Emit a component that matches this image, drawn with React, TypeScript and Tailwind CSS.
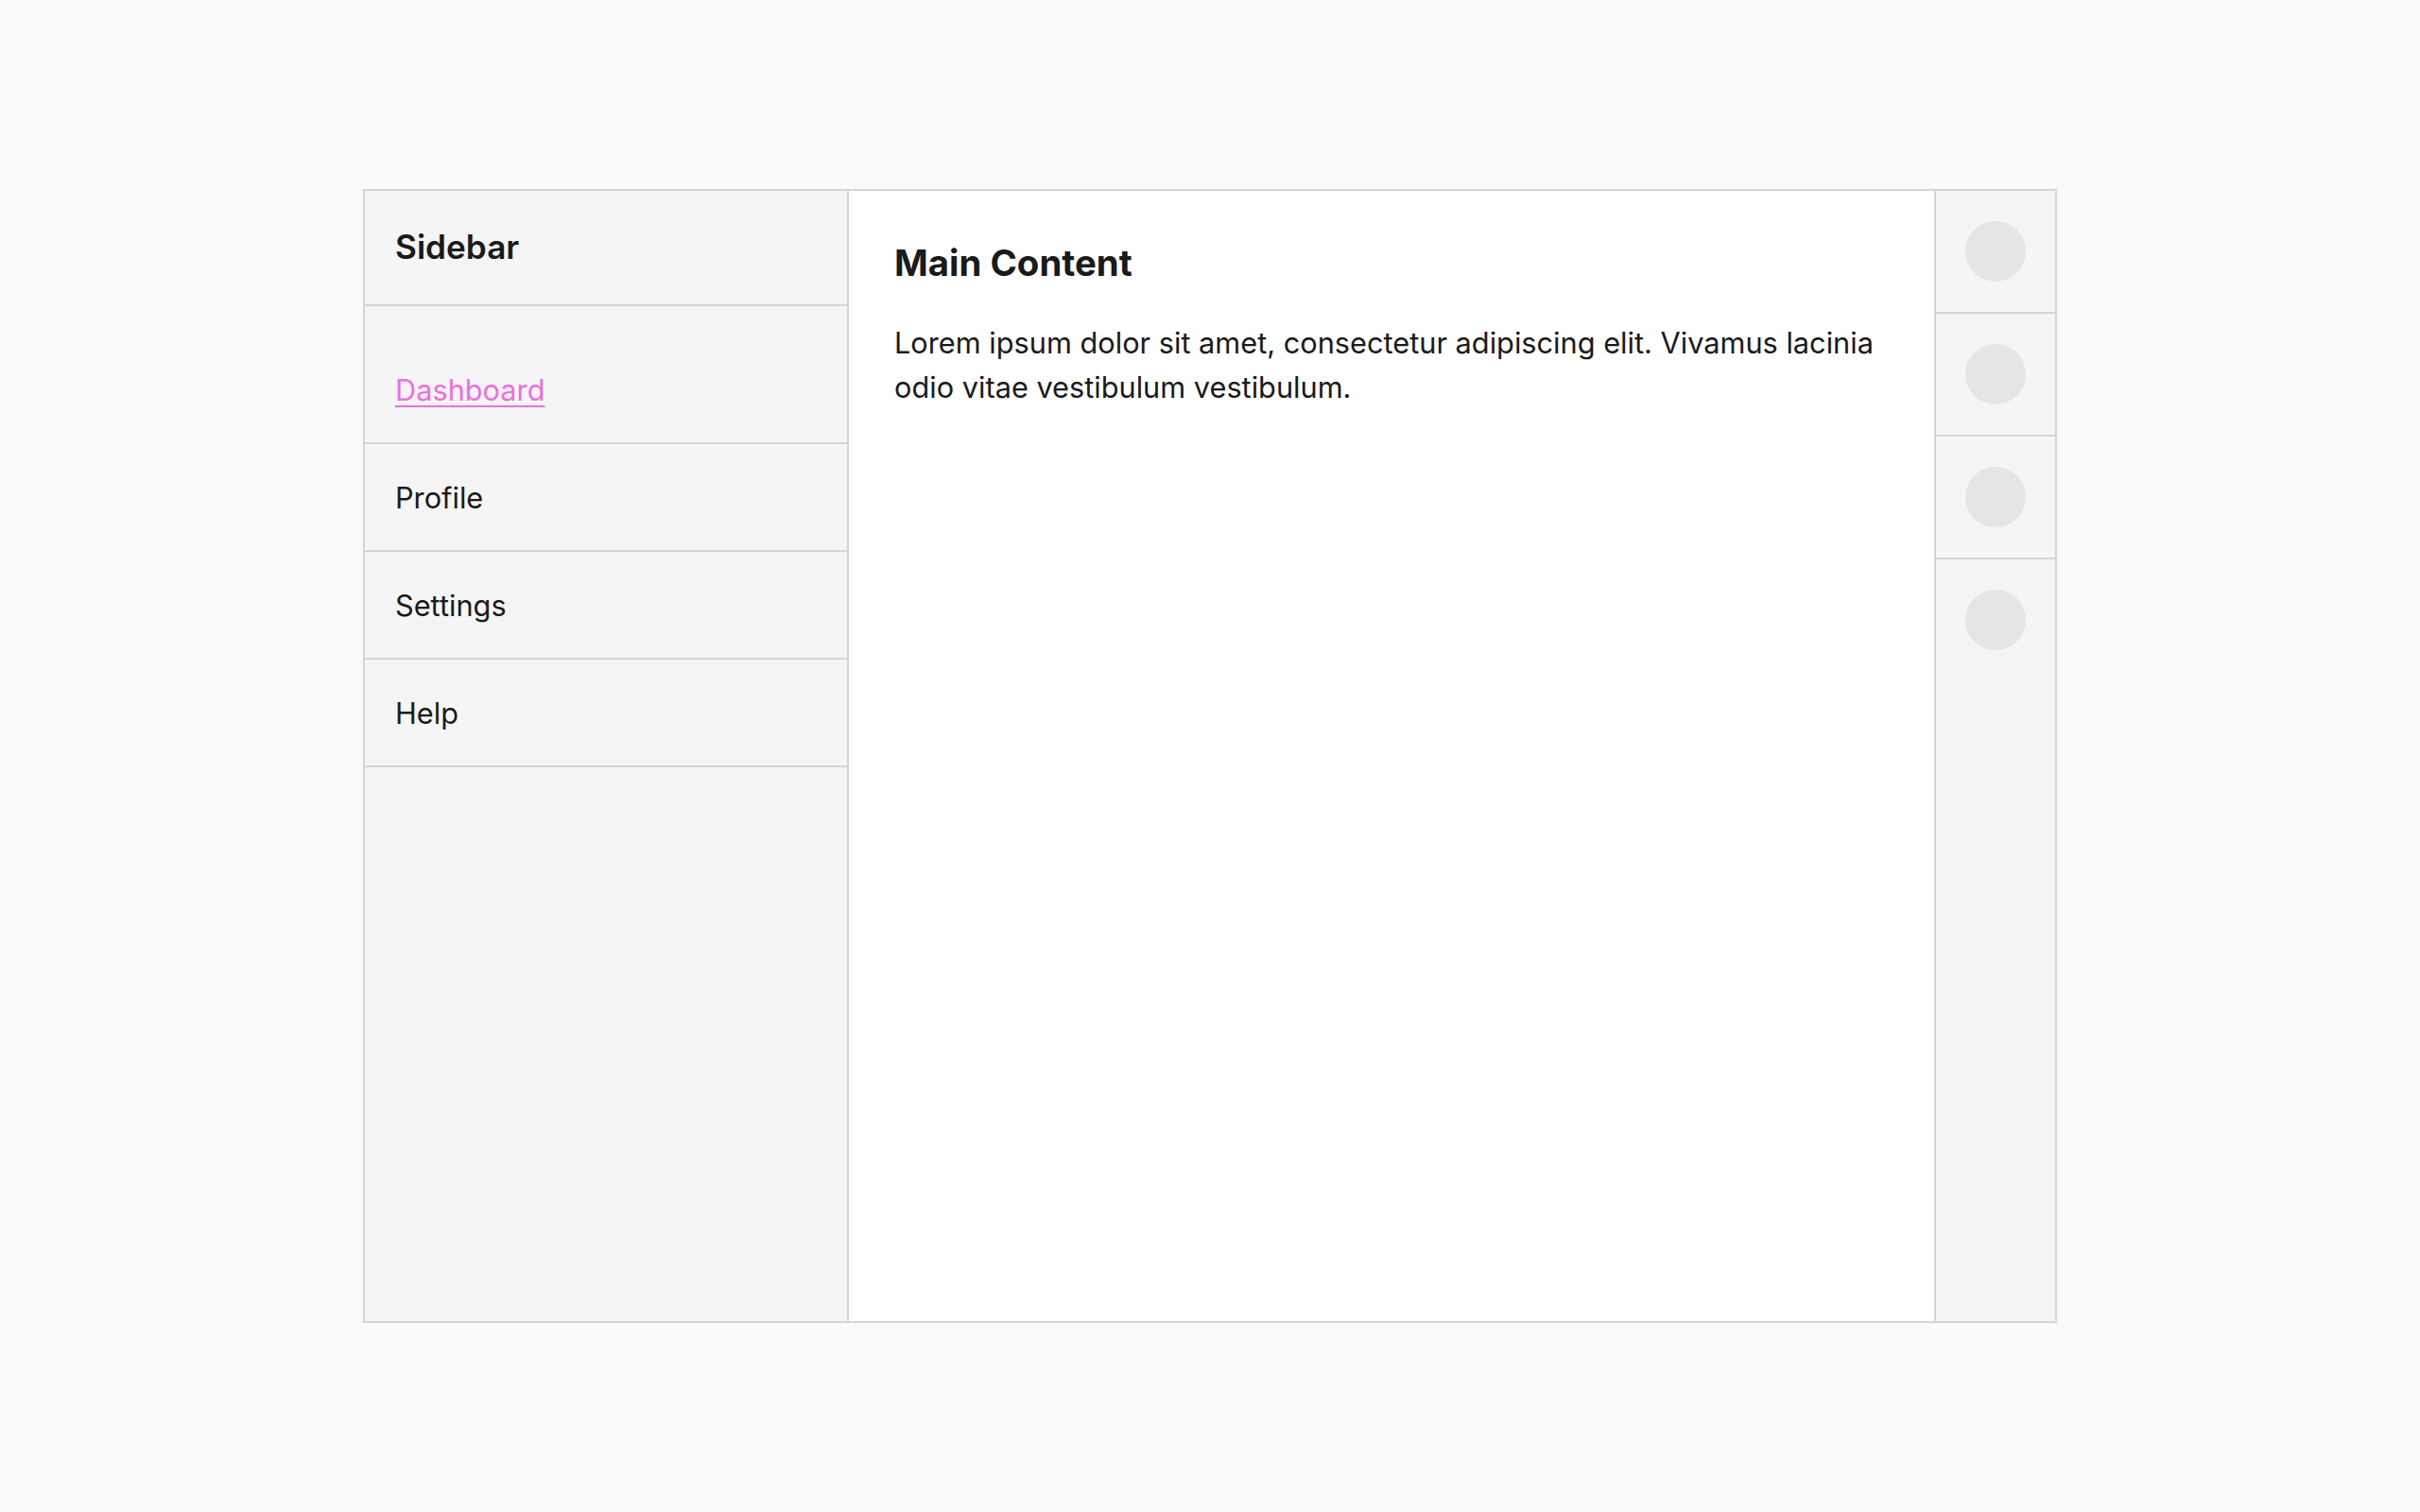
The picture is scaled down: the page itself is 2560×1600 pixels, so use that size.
import React from "react";

export default function App() {
  const nav = ["Dashboard", "Profile", "Settings", "Help"];
  return (
    <div
      className="min-h-screen w-full bg-[#fafafa] flex items-center justify-center text-[#1a1a1a]"
      style={{ fontFamily: "Inter, 'Noto Sans', sans-serif" }}
    >
      <div className="w-[1792px] h-[1200px] border-2 border-[#d4d4d4] flex">
        <aside className="w-[512px] shrink-0 bg-[#f5f5f5] border-r-2 border-[#d4d4d4] flex flex-col">
          <div className="h-[122px] border-b-2 border-[#d4d4d4] flex items-center px-[32px]">
            <h1 className="text-[35.2px] font-semibold leading-none">Sidebar</h1>
          </div>
          <ul className="pt-[32px]">
            {nav.map((item, i) => (
              <li
                key={item}
                className="h-[114px] border-b-2 border-[#d4d4d4] flex items-center px-[32px] pt-[2px] text-[30.72px]"
              >
                {i === 0 ? (
                  <a href="#" className="text-[#ec6fdc] underline underline-offset-[5px] decoration-2">
                    {item}
                  </a>
                ) : (
                  <span>{item}</span>
                )}
              </li>
            ))}
          </ul>
        </aside>
        <main className="flex-1 bg-white px-[48px] pt-[48px]">
          <h2 className="text-[38.4px] font-bold leading-[57px]">Main Content</h2>
          <p className="mt-[32px] text-[30.72px] leading-[47px]">
            Lorem ipsum dolor sit amet, consectetur adipiscing elit. Vivamus lacinia odio vitae vestibulum vestibulum.
          </p>
        </main>
        <aside className="w-[128px] shrink-0 bg-[#f5f5f5] border-l-2 border-[#d4d4d4] flex flex-col">
          {[0, 1, 2, 3].map((i) => (
            <div
              key={i}
              className={
                i < 3
                  ? "h-[130px] border-b-2 border-[#d4d4d4] flex items-center justify-center"
                  : "h-[128px] flex items-center justify-center"
              }
            >
              <div className="w-[64px] h-[64px] rounded-full bg-[#e5e5e5]" />
            </div>
          ))}
        </aside>
      </div>
    </div>
  );
}
